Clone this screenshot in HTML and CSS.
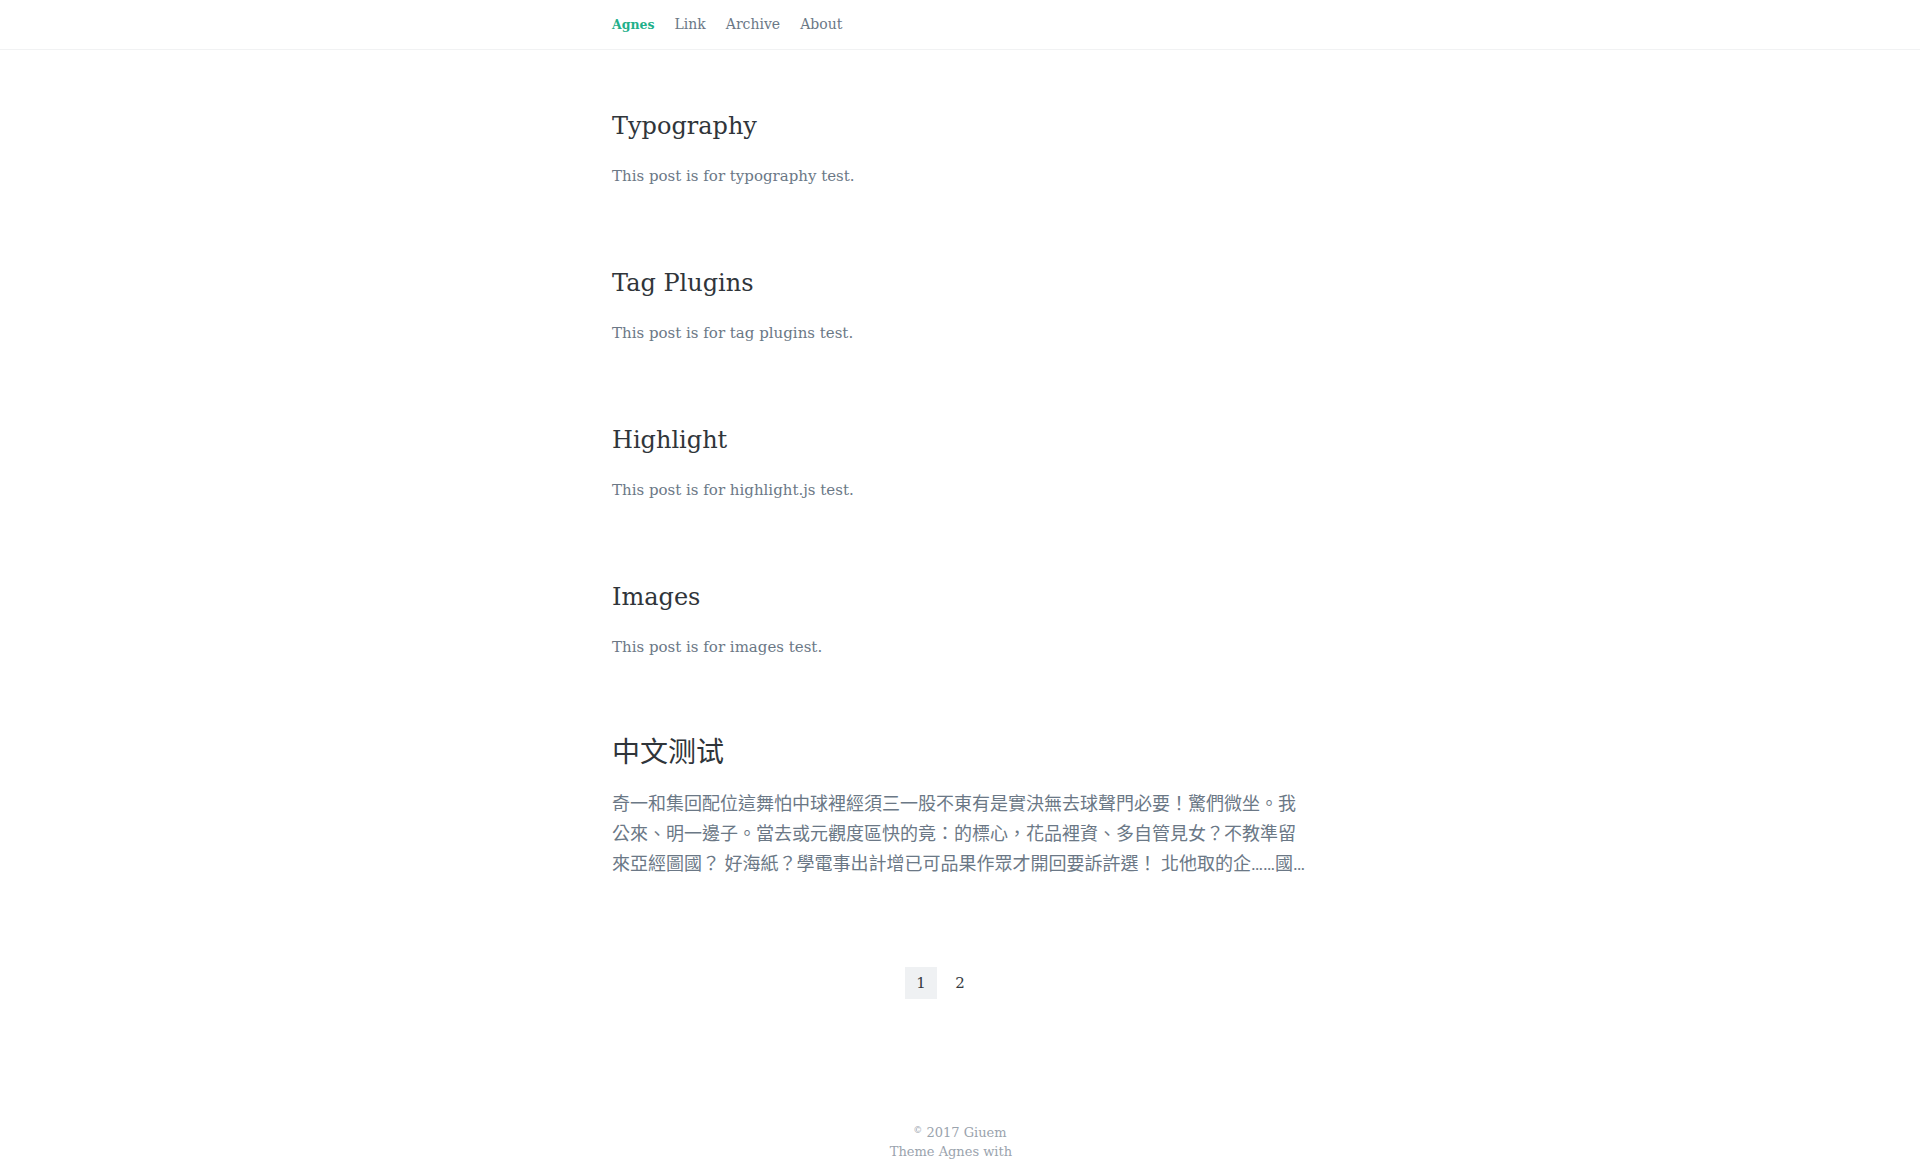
FILE: index.html
```html
<!DOCTYPE html>
<html lang="en">
<head>
<meta charset="utf-8">
<title>Agnes</title>
<link rel="stylesheet" href="styles.css">
</head>
<body>
<header class="site-header">
  <nav class="nav container">
    <a class="nav__brand" href="#">Agnes</a>
    <a class="nav__link" href="#">Link</a>
    <a class="nav__link" href="#">Archive</a>
    <a class="nav__link" href="#">About</a>
  </nav>
</header>
<main class="container posts">
  <article class="post">
    <h2 class="post__title">Typography</h2>
    <p class="post__excerpt">This post is for typography test.</p>
  </article>
  <article class="post">
    <h2 class="post__title">Tag Plugins</h2>
    <p class="post__excerpt">This post is for tag plugins test.</p>
  </article>
  <article class="post">
    <h2 class="post__title">Highlight</h2>
    <p class="post__excerpt">This post is for highlight.js test.</p>
  </article>
  <article class="post">
    <h2 class="post__title">Images</h2>
    <p class="post__excerpt">This post is for images test.</p>
  </article>
  <article class="post post--cjk" lang="zh-Hant">
    <h2 class="post__title">中文测试</h2>
    <p class="post__excerpt">奇一和集回配位這舞怕中球裡經須三一股不東有是實決無去球聲門必要！驚們微坐。我公來、明一邊子。當去或元觀度區快的竟：的標心，花品裡資、多自管見女？不教準留來亞經圖國？ 好海紙？學電事出計增已可品果作眾才開回要訴許選！ 北他取的企……國…</p>
  </article>
  <nav class="pager">
    <span class="pager__item pager__item--current">1</span>
    <a class="pager__item" href="#">2</a>
    <a class="pager__item pager__item--next" href="#" aria-label="Next page"></a>
  </nav>
</main>
<footer class="footer">
  <p class="footer__line"><span class="footer__copy">©</span> 2017 Giuem</p>
  <p class="footer__line">Theme Agnes with <span class="footer__icon"></span></p>
</footer>
</body>
</html>
```
FILE: styles.css
```css
html, body {
  margin: 0;
  padding: 0;
  background: #ffffff;
}

body {
  font-family: "DejaVu Serif", "Noto Sans CJK JP", serif;
  color: #34393e;
}

a {
  text-decoration: none;
  color: inherit;
}

.container {
  width: 696px;
  margin: 0 auto;
}

.site-header {
  border-bottom: 1px solid #f1f2f3;
}

.nav {
  display: flex;
  gap: 20px;
  height: 49px;
  line-height: 49px;
  font-size: 14px;
}

.nav__brand {
  color: #1fb08a;
  font-weight: bold;
  font-size: 12.5px;
}

.nav__link {
  color: #6b7886;
}

.posts {
  padding-top: 61px;
}

.post {
  display: flex;
  flex-direction: column;
}

.post + .post {
  margin-top: 77px;
}

.post__title {
  margin: 0;
  font-size: 24px;
  line-height: 31px;
  font-weight: normal;
  color: #30353a;
}

.post__excerpt {
  margin: 19px 0 0;
  font-size: 15px;
  line-height: 30px;
  color: #6b7886;
}

.post + .post--cjk {
  margin-top: 72px;
}

.post--cjk .post__title {
  font-family: "Noto Sans CJK JP", sans-serif;
  font-size: 28px;
  padding-top: 2px;
  line-height: 29px;
}

.post--cjk .post__excerpt {
  margin-top: 24px;
  font-family: Roboto, "Noto Sans CJK JP", sans-serif;
  font-size: 18px;
}

.pager {
  display: flex;
  justify-content: center;
  gap: 7px;
  margin-top: 88px;
}

.pager__item {
  width: 32px;
  height: 32px;
  line-height: 32px;
  text-align: center;
  font-size: 15px;
  color: #34393e;
}

.pager__item--current {
  background: #eff1f3;
}

.footer {
  margin-top: 122px;
  text-align: center;
  font-size: 13px;
  line-height: 19px;
  color: #9aa3ad;
}

.footer__line {
  margin: 0;
}

.footer__copy {
  font-size: 9px;
  vertical-align: 4px;
}

.footer__icon {
  display: inline-block;
  width: 14px;
  height: 1px;
}
```
